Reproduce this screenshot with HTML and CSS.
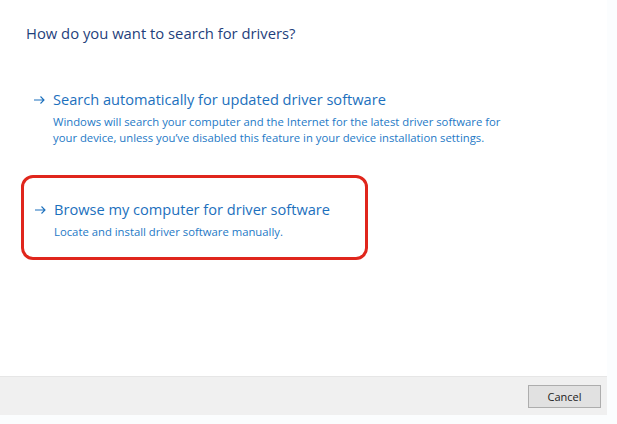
FILE: index.html
```html
<!DOCTYPE html>
<html lang="en">
<head>
  <meta charset="UTF-8" />
  <title>Update Drivers</title>
  <link rel="stylesheet" href="styles.css">
</head>
<body>
  <div class="dialog">
    <div class="content">
      <h2 class="title">How do you want to search for drivers?</h2>

      <div class="option">
        <div class="option-head">
          <svg class="arrow" width="11" height="8" viewBox="0 0 11 8"><path d="M0 4H10M6.5 0.5L10 4L6.5 7.5" fill="none" stroke="currentColor" stroke-width="1.1"/></svg>
          Search automatically for updated driver software
        </div>
        <p class="option-desc">Windows will search your computer and the Internet for the latest driver software for your device, unless you&rsquo;ve disabled this feature in your device installation settings.</p>
      </div>

      <div class="option highlight">
        <div class="option-head">
          <svg class="arrow" width="11" height="8" viewBox="0 0 11 8"><path d="M0 4H10M6.5 0.5L10 4L6.5 7.5" fill="none" stroke="currentColor" stroke-width="1.1"/></svg>
          Browse my computer for driver software
        </div>
        <p class="option-desc">Locate and install driver software manually.</p>
      </div>
    </div>

    <div class="footer">
      <button class="btn">Cancel</button>
    </div>
  </div>
</body>
</html>
```

FILE: styles.css
```css
* {
  box-sizing: border-box;
}
body {
  margin: 0;
  background: #fbfdfe;
  font-family: 'Open Sans', 'Noto Sans', sans-serif;
}
.dialog {
  width: 607px;
  height: 415px;
  background: white;
  display: flex;
  flex-direction: column;
}
.content {
  flex: 1;
  padding: 23px 0 0 26px;
}
.title {
  margin: 0 0 46px;
  font-size: 14.8px;
  font-weight: normal;
  color: #1f3f7c;
}
.option {
  padding: 0 0 0 8px;
  color: #2479c6;
}
.option-head {
  font-size: 14.6px;
  color: #1c70bd;
  display: flex;
  align-items: center;
}
.arrow {
  margin: 1px 8px 0 0;
  flex-shrink: 0;
}
.option-desc {
  margin: 5px 0 0 19px;
  font-size: 11.3px;
  line-height: 16px;
  width: 470px;
}
.highlight {
  width: 347px;
  margin: 29px 0 0 -5px;
  padding: 21px 0 17px 11px;
  border: 3px solid #e0261c;
  border-radius: 12px;
}
.footer {
  height: 39px;
  background: #f0f0f0;
  border-top: 1px solid #e6e6e6;
  display: flex;
  justify-content: flex-end;
  align-items: center;
  padding-right: 6px;
}
.btn {
  width: 73px;
  height: 23px;
  background: #e1e1e1;
  border: 1px solid #adadad;
  font-family: inherit;
  font-size: 11px;
  color: #222;
  padding: 0;
}
```
